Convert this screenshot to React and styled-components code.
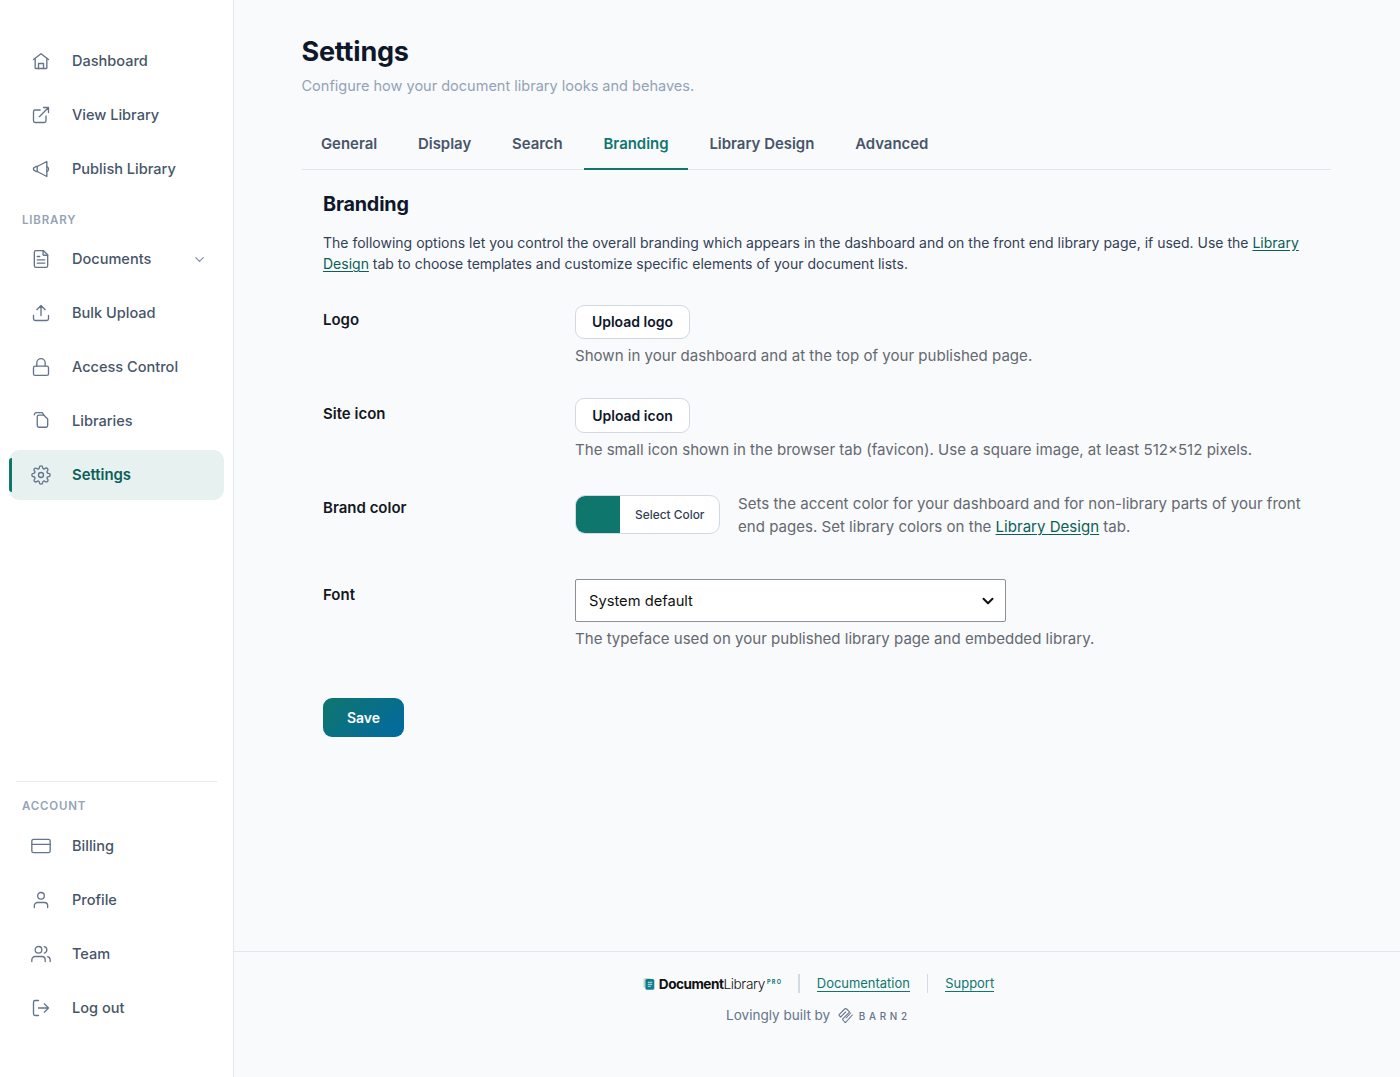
import React from "react";
import styled, { createGlobalStyle } from "styled-components";
import { ChevronDown } from "lucide-react";

const GlobalStyle = createGlobalStyle`
  * {
    box-sizing: border-box;
  }
  body {
    margin: 0;
    background: #f9fafc;
    font-family: Inter, "Liberation Sans", sans-serif;
    color: #0f172a;
  }
  h1, h2, p {
    margin: 0;
  }
  button {
    font-family: inherit;
    cursor: pointer;
  }
`;

const Page = styled.div`
  display: flex;
  height: 1077px;
`;

// ── Sidebar ───────────────────────────────────────────────────────────────────
const Sidebar = styled.aside`
  width: 234px;
  flex-shrink: 0;
  display: flex;
  flex-direction: column;
  justify-content: space-between;
  background: #ffffff;
  border-right: 1px solid #e5e8ed;
  padding: 36px 9px 44.5px;
`;

const NavGroup = styled.nav`
  display: flex;
  flex-direction: column;
  gap: 4px;
`;

const AccountGroup = styled(NavGroup)`
  &::before {
    content: "";
    height: 1px;
    margin: 0 7px;
    background: #e8ebef;
  }
`;

const NavLabel = styled.div`
  padding: ${({ $account }) => ($account ? "13px 13px 3px" : "15px 13px 2px")};
  font-size: 11.5px;
  line-height: 15px;
  font-weight: 600;
  letter-spacing: 0.83px;
  color: #94a3b8;
`;

const NavItem = styled.a`
  position: relative;
  display: flex;
  align-items: center;
  height: 50px;
  padding: 0 17px 0 22px;
  border-radius: 11px;
  font-size: ${({ $active }) => ($active ? 14.9 : 14.55)}px;
  font-weight: ${({ $active }) => ($active ? 600 : 500)};
  color: ${({ $active }) => ($active ? "#0b5f58" : "#475569")};
  background: ${({ $active }) => ($active ? "#e7f1f0" : "transparent")};

  &::before {
    content: "";
    display: ${({ $active }) => ($active ? "block" : "none")};
    position: absolute;
    left: -0.4px;
    top: 8px;
    width: 3.4px;
    height: 34px;
    border-radius: 3px 0 0 3px;
    background: #0f766e;
  }

  > span {
    flex: 1;
    margin-left: 21px;
    line-height: 18px;
  }
`;

const Icon = styled.svg`
  width: 20px;
  height: 20px;
  flex-shrink: 0;
  fill: none;
  stroke: #64748b;
  stroke-width: 1.6;
  stroke-linecap: round;
  stroke-linejoin: round;
`;

// ── Main column ───────────────────────────────────────────────────────────────
const Main = styled.main`
  flex: 1;
  display: flex;
  flex-direction: column;
`;

const Content = styled.div`
  flex: 1;
  padding: 34px 69px 0 67.5px;
`;

const Title = styled.h1`
  font-size: 27px;
  line-height: 36px;
  font-weight: 700;
  letter-spacing: -0.2px;
`;

const Subtitle = styled.p`
  margin-top: 4.5px;
  font-size: 14.52px;
  line-height: 22px;
  color: #94a3b8;
`;

const Tabs = styled.div`
  display: flex;
  gap: 2px;
  height: 53px;
  margin-top: 20px;
  border-bottom: 1px solid #e2e6ec;
`;

const Tab = styled.a`
  height: 53px;
  padding: 16px 19.4px 0;
  font-size: 14.95px;
  line-height: 22px;
  font-weight: 600;
  color: ${({ $active }) => ($active ? "#0f766e" : "#475569")};
  border-bottom: 2px solid ${({ $active }) => ($active ? "#0f766e" : "transparent")};
`;

const Panel = styled.section`
  padding: 20px 21px 0 21.5px;
`;

const PanelTitle = styled.h2`
  font-size: 19.8px;
  line-height: 28px;
  font-weight: 700;
  letter-spacing: -0.2px;
`;

const Intro = styled.p`
  margin-top: 14.4px;
  font-size: 14px;
  line-height: 21.6px;
  color: #334155;
`;

const Link = styled.a`
  color: #0b5f58;
  text-decoration: underline;
  text-underline-offset: 2px;
`;

const Field = styled.div`
  display: grid;
  grid-template-columns: 252px 1fr;
  height: ${({ $height }) => $height}px;
`;

const FieldLabel = styled.div`
  padding-top: 4.8px;
  font-size: 15px;
  line-height: 22px;
  font-weight: 600;
  color: #14181f;
`;

const Fields = styled.div`
  padding-top: 29.6px;
`;

const OutlineButton = styled.button`
  display: block;
  width: 115px;
  height: 34.5px;
  padding: 0;
  border: 1px solid #d3d9e1;
  border-radius: 9px;
  background: #ffffff;
  font-size: 14px;
  font-weight: 600;
  color: #0f172a;
`;

const Help = styled.p`
  margin-top: ${({ $top = 5.9 }) => $top}px;
  font-size: 15.07px;
  line-height: 22.5px;
  color: #646970;
`;

const ColorRow = styled.div`
  display: flex;
  align-items: flex-start;
  gap: 18px;
`;

const ColorButton = styled.button`
  display: flex;
  flex-shrink: 0;
  width: 145px;
  height: 38.5px;
  margin-top: 3px;
  padding: 0;
  overflow: hidden;
  border: 1px solid #d3d9e1;
  border-radius: 10px;
  background: #ffffff;
  font-size: 11.9px;
  font-weight: 500;
  color: #334155;
`;

const Swatch = styled.span`
  width: 43.5px;
  height: 100%;
  background: #0f766e;
`;

const ColorText = styled.span`
  flex: 1;
  align-self: center;
  padding: 1px 0 0 1px;
  text-align: center;
`;

const SelectBox = styled.div`
  display: flex;
  align-items: center;
  justify-content: space-between;
  width: 431px;
  height: 43px;
  padding: 0 8.5px 0 13px;
  border: 1px solid #8c8f94;
  border-radius: 2px;
  background: #ffffff;
  font-size: 14.7px;
  color: #111111;
`;

const SaveButton = styled.button`
  display: block;
  width: 81px;
  height: 39px;
  border: 0;
  border-radius: 9px;
  background: linear-gradient(135deg, #0f766e, #0369a1);
  font-size: 14px;
  font-weight: 600;
  color: #ffffff;
`;

// ── Footer ────────────────────────────────────────────────────────────────────
const Footer = styled.footer`
  display: flex;
  flex-direction: column;
  align-items: center;
  height: 126px;
  padding-top: 21px;
  border-top: 1px solid #e2e6ec;
  font-size: 12.95px;
  color: #64748b;
`;

const FooterLinks = styled.div`
  display: flex;
  align-items: center;
  height: 21px;
  margin-left: 3px;
`;

const FooterLink = styled.a`
  line-height: 16px;
  border-bottom: 1px solid #0f766e;
  color: #0f766e;
`;

const Separator = styled.span`
  width: 1.5px;
  height: 19px;
  margin: 0 17px;
  background: #d5dbe4;
`;

const ProductLogo = styled.div`
  display: flex;
  align-items: center;
  font-size: 13.6px;
  letter-spacing: -0.5px;
  color: #111111;

  svg {
    margin-right: 4px;
  }
  b {
    font-weight: 700;
  }
  span {
    font-weight: 300;
    letter-spacing: -0.35px;
  }
  sup {
    align-self: flex-start;
    margin: 3px -1px 0 2px;
    font-size: 5.5px;
    line-height: 7px;
    font-weight: 700;
    letter-spacing: 1.3px;
    color: #0f766e;
  }
`;

const Credit = styled.div`
  display: flex;
  align-items: center;
  height: 20px;
  margin: 11px 0 0 3px;
  font-size: 13.5px;

  svg {
    margin: 0 5.5px 0 8px;
  }
`;

const BarnName = styled.span`
  padding-top: 1px;
  font-size: 9.9px;
  font-weight: 500;
  letter-spacing: 3.75px;
`;

const icons = {
  home: (
    <>
      <path d="M3 10.2 12 3.2l9 7" />
      <path d="M5 8.8V20a1 1 0 0 0 1 1h12a1 1 0 0 0 1-1V8.8" />
      <path d="M9 21v-6h6v6" />
    </>
  ),
  external: (
    <>
      <path d="M18 13v6a2 2 0 0 1-2 2H5a2 2 0 0 1-2-2V8a2 2 0 0 1 2-2h6" />
      <path d="M15 3h6v6M10 14 21 3" />
    </>
  ),
  megaphone: (
    <>
      <path d="M7.5 9 19 3v18L7.500 15H6l-3-2v-2l3-2z" />
      <path d="M7.5 9v6M19 9a3.2 3.2 0 0 1 0 6" />
    </>
  ),
  document: (
    <>
      <path d="M15 2H6a2 2 0 0 0-2 2v16a2 2 0 0 0 2 2h12a2 2 0 0 0 2-2V7z" />
      <path d="M14.5 2v4.5a1 1 0 0 0 1 1H20M16.5 13h-9M16.5 17h-9M10.5 9h-3" />
    </>
  ),
  upload: (
    <>
      <path d="M21 15v4a2 2 0 0 1-2 2H5a2 2 0 0 1-2-2v-4" />
      <path d="m17 8-5-5-5 5M12 3v12" />
    </>
  ),
  lock: (
    <>
      <rect x="3" y="11" width="18" height="11" rx="2" />
      <path d="M7 11V7a5 5 0 0 1 10 0v4" />
    </>
  ),
  libraries: (
    <>
      <path d="M15.5 5H9.5a2 2 0 0 0-2 2V17.5a2 2 0 0 0 2 2h8.5a2 2 0 0 0 2-2V9.5z" />
      <path d="M4 4.5a2.5 2.5 0 0 1 2-2.5h7.5l2 3" />
    </>
  ),
  settings: (
    <>
      <circle cx="12" cy="12" r="3" />
      <path d="M19.4 15a1.65 1.65 0 0 0 .33 1.82l.06.06a2 2 0 0 1 0 2.83 2 2 0 0 1-2.83 0l-.06-.06a1.65 1.65 0 0 0-1.82-.33 1.65 1.65 0 0 0-1 1.51V21a2 2 0 0 1-2 2 2 2 0 0 1-2-2v-.09A1.65 1.65 0 0 0 9 19.4a1.65 1.65 0 0 0-1.82.33l-.06.06a2 2 0 0 1-2.83 0 2 2 0 0 1 0-2.83l.06-.06a1.65 1.65 0 0 0 .33-1.82 1.65 1.65 0 0 0-1.51-1H3a2 2 0 0 1-2-2 2 2 0 0 1 2-2h.09A1.65 1.65 0 0 0 4.6 9a1.65 1.65 0 0 0-.33-1.82l-.06-.06a2 2 0 0 1 0-2.83 2 2 0 0 1 2.83 0l.06.06a1.65 1.65 0 0 0 1.82.33H9a1.65 1.65 0 0 0 1-1.51V3a2 2 0 0 1 2-2 2 2 0 0 1 2 2v.09a1.65 1.65 0 0 0 1 1.51 1.65 1.65 0 0 0 1.82-.33l.06-.06a2 2 0 0 1 2.83 0 2 2 0 0 1 0 2.83l-.06.06a1.65 1.65 0 0 0-.33 1.82V9a1.65 1.65 0 0 0 1.51 1H21a2 2 0 0 1 2 2 2 2 0 0 1-2 2h-.09a1.65 1.65 0 0 0-1.51 1z" />
    </>
  ),
  card: (
    <>
      <rect x="1" y="4" width="22" height="16" rx="2" />
      <path d="M1 10h22" />
    </>
  ),
  user: (
    <>
      <path d="M20 21v-2a4 4 0 0 0-4-4H8a4 4 0 0 0-4 4v2" />
      <circle cx="12" cy="7" r="4" />
    </>
  ),
  team: (
    <>
      <path d="M17 21v-2a4 4 0 0 0-4-4H5a4 4 0 0 0-4 4v2" />
      <circle cx="9" cy="7" r="4" />
      <path d="M23 21v-2a4 4 0 0 0-3-3.87M16 3.13a4 4 0 0 1 0 7.75" />
    </>
  ),
  logout: (
    <>
      <path d="M9 21H5a2 2 0 0 1-2-2V5a2 2 0 0 1 2-2h4" />
      <path d="m16 17 5-5-5-5M21 12H9" />
    </>
  ),
};

const topLinks = [
  { icon: "home", label: "Dashboard" },
  { icon: "external", label: "View Library" },
  { icon: "megaphone", label: "Publish Library" },
];

const libraryLinks = [
  { icon: "document", label: "Documents", expandable: true },
  { icon: "upload", label: "Bulk Upload" },
  { icon: "lock", label: "Access Control" },
  { icon: "libraries", label: "Libraries" },
  { icon: "settings", label: "Settings", active: true },
];

const accountLinks = [
  { icon: "card", label: "Billing" },
  { icon: "user", label: "Profile" },
  { icon: "team", label: "Team" },
  { icon: "logout", label: "Log out" },
];

const tabs = ["General", "Display", "Search", "Branding", "Library Design", "Advanced"];

const NavLinks = ({ items }) =>
  items.map((item) => (
    <NavItem key={item.label} $active={item.active}>
      <Icon viewBox="0 0 24 24">{icons[item.icon]}</Icon>
      <span>{item.label}</span>
      {item.expandable && <ChevronDown size={15} strokeWidth={2.2} color="#8795aa" />}
    </NavItem>
  ));

const ProductMark = () => (
  <svg width="12" height="12" viewBox="0 0 12 12">
    <defs>
      <linearGradient id="mark" x1="0" y1="0" x2="1" y2="1">
        <stop offset="0" stopColor="#0f766e" />
        <stop offset="1" stopColor="#0e86a8" />
      </linearGradient>
    </defs>
    <rect x="0.5" y="0.3" width="8" height="9.5" rx="1.5" fill="#b9d3d6" />
    <rect x="2.5" y="1" width="8.8" height="10.8" rx="1.6" fill="url(#mark)" />
    <path d="M4.8 4.3h4.4M4.8 6.3h4.4M4.8 8.3h3" stroke="#d8f0ee" strokeWidth="0.9" />
  </svg>
);

const BarnMark = () => (
  <svg
    width="15"
    height="15"
    viewBox="0 0 45 45"
    fill="none"
    stroke="#64748b"
    strokeWidth="3.2"
    strokeLinecap="round"
    strokeLinejoin="round"
  >
    <path d="M23 12 12 23q-2 2-4 4l-4-4q-2-2 0-4L20 3q3-2 6 0l7 7q2 2 0 4L15 32q-2 2 0 4l5 6q2 2 4 0L43 21" />
    <path d="M38 15 24 30" />
  </svg>
);

const App = () => (
  <>
    <GlobalStyle />
    <Page>
      <Sidebar>
        <NavGroup>
          <NavLinks items={topLinks} />
          <NavLabel>LIBRARY</NavLabel>
          <NavLinks items={libraryLinks} />
        </NavGroup>
        <AccountGroup>
          <NavLabel $account>ACCOUNT</NavLabel>
          <NavLinks items={accountLinks} />
        </AccountGroup>
      </Sidebar>

      <Main>
        <Content>
          <Title>Settings</Title>
          <Subtitle>Configure how your document library looks and behaves.</Subtitle>
          <Tabs>
            {tabs.map((tab) => (
              <Tab key={tab} $active={tab === "Branding"}>
                {tab}
              </Tab>
            ))}
          </Tabs>

          <Panel>
            <PanelTitle>Branding</PanelTitle>
            <Intro>
              The following options let you control the overall branding which appears in the
              dashboard and on the front end library page, if used. Use the{" "}
              <Link>Library Design</Link> tab to choose templates and customize specific elements
              of your document lists.
            </Intro>

            <Fields>
              <Field $height={93.7}>
                <FieldLabel>Logo</FieldLabel>
                <div>
                  <OutlineButton>Upload logo</OutlineButton>
                  <Help>Shown in your dashboard and at the top of your published page.</Help>
                </div>
              </Field>
              <Field $height={93.7}>
                <FieldLabel>Site icon</FieldLabel>
                <div>
                  <OutlineButton>Upload icon</OutlineButton>
                  <Help>
                    The small icon shown in the browser tab (favicon). Use a square image, at least
                    512×512 pixels.
                  </Help>
                </div>
              </Field>
              <Field $height={87.2}>
                <FieldLabel>Brand color</FieldLabel>
                <ColorRow>
                  <ColorButton>
                    <Swatch />
                    <ColorText>Select Color</ColorText>
                  </ColorButton>
                  <Help $top={1.3}>
                    Sets the accent color for your dashboard and for non-library parts of your front
                    end pages. Set library colors on the <Link>Library Design</Link> tab.
                  </Help>
                </ColorRow>
              </Field>
              <Field $height={118.5}>
                <FieldLabel>Font</FieldLabel>
                <div>
                  <SelectBox>
                    System default
                    <ChevronDown size={18} strokeWidth={2.7} />
                  </SelectBox>
                  <Help>The typeface used on your published library page and embedded library.</Help>
                </div>
              </Field>
              <SaveButton>Save</SaveButton>
            </Fields>
          </Panel>
        </Content>

        <Footer>
          <FooterLinks>
            <ProductLogo>
              <ProductMark />
              <b>Document</b>
              <span>Library</span>
              <sup>PRO</sup>
            </ProductLogo>
            <Separator />
            <FooterLink>Documentation</FooterLink>
            <Separator />
            <FooterLink>Support</FooterLink>
          </FooterLinks>
          <Credit>
            Lovingly built by
            <BarnMark />
            <BarnName>BARN2</BarnName>
          </Credit>
        </Footer>
      </Main>
    </Page>
  </>
);

export default App;
